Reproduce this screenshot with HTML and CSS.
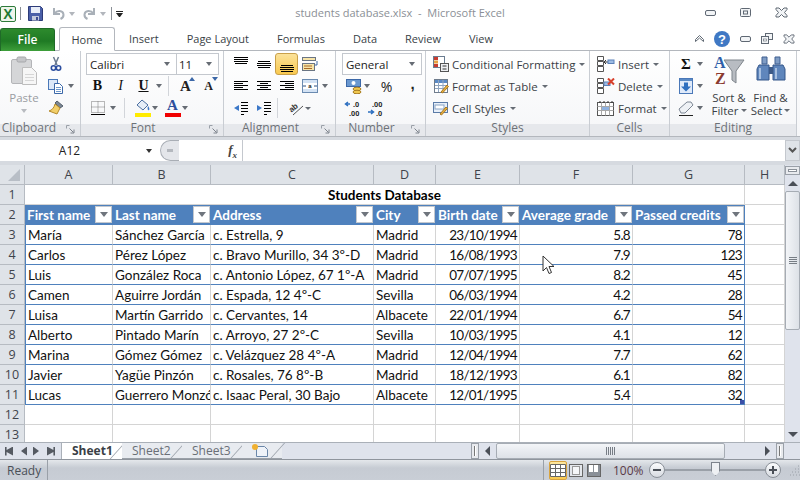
FILE: index.html
```html
<!DOCTYPE html>
<html lang="en">
  <head>
    <meta charset="UTF-8" />
    <meta name="viewport" content="width=device-width, initial-scale=1.0" />
    <title>students database.xlsx - Microsoft Excel</title>
    <link rel="stylesheet" href="styles.css">
  </head>
  <body>
    <svg class="defs" aria-hidden="true">
      <symbol id="al-top" viewBox="0 0 16 16"><path d="M1 1.500h14M1 3.500h14M1 5.500h14M2 7.500h12" stroke="#000" fill="none"/></symbol>
      <symbol id="al-mid" viewBox="0 0 16 16"><path d="M2 5.500h12M1 7.500h14M1 9.500h14M2 11.500h12" stroke="#000" fill="none"/></symbol>
      <symbol id="al-bot" viewBox="0 0 16 16"><path d="M2 9.500h12M1 11.500h14M1 13.500h14M2 15.500h12" stroke="#000" fill="none"/></symbol>
      <symbol id="al-left" viewBox="0 0 16 16"><path d="M1 3.500h14M1 5.500h9M1 7.500h14M1 9.500h9M1 11.500h14" stroke="#000" fill="none"/></symbol>
      <symbol id="al-center" viewBox="0 0 16 16"><path d="M1 3.500h14M4 5.500h8M1 7.500h14M4 9.500h8M1 11.500h14" stroke="#000" fill="none"/></symbol>
      <symbol id="al-right" viewBox="0 0 16 16"><path d="M1 3.500h14M6 5.500h9M1 7.500h14M6 9.500h9M1 11.500h14" stroke="#000" fill="none"/></symbol>
      <symbol id="launcher" viewBox="0 0 9 9"><path d="M.5 3.500v-3h3" stroke="#9aa0a8" fill="none"/><path d="M3.500 3.500l4 4M8 4.500V8H4.500" stroke="#7d838c" fill="none"/></symbol>
      <symbol id="win-x" viewBox="0 0 13 11"><path d="M1 1h3l2.500 2.500L9 1h3v1.500L9.500 5.500 12 8.500V10H9L6.500 7.500 4 10H1V8.500l2.500-3L1 2.500z" fill="#f2f4f6" stroke="#5f6873"/></symbol>
      <symbol id="win-min" viewBox="0 0 11 6"><rect x=".5" y=".5" width="10" height="5" rx="1.500" fill="#f2f4f6" stroke="#5f6873"/></symbol>
      <symbol id="gear" viewBox="0 0 16 16"><rect x="1.500" y="1.500" width="13" height="13" fill="#fff" stroke="#6f7c8c"/><rect x="2" y="2" width="12" height="3" fill="#5a8ac6"/><path d="M5.500 2v12M10 2v12M2 7.500h12M2 10.500h12" stroke="#8fa5c0" fill="none"/></symbol>
    </svg>

    <header class="title-bar">
      <div class="quick">
        <svg class="logo" width="16" height="16" viewBox="0 0 16 16"><rect x=".5" y=".5" width="15" height="15" rx="1.500" fill="#eef5ea" stroke="#2d7a3a"/><text x="8" y="13" text-anchor="middle" class="logo-x">X</text></svg>
        <span class="q-sep"></span>
        <svg class="q-save" width="15" height="15" viewBox="0 0 15 15"><path d="M.5 .5h12l2 2v12H.5z" fill="#4a5fa8" stroke="#2d3b78"/><rect x="3" y="1" width="9" height="6" fill="#e8edf8"/><rect x="4" y="10" width="7" height="4.500" fill="#c3c9dc"/><rect x="8" y="11" width="2" height="3" fill="#3c4c90"/></svg>
        <svg class="q-undo" width="13" height="13" viewBox="0 0 13 13"><path d="M2 1v6h6M2.500 6.500C5 3 11 3 11.500 7.500c.2 2-1 3.500-3 4.500" fill="none" stroke="#a9b0b8" stroke-width="2"/></svg>
        <span class="caret q-caret"></span>
        <svg class="q-redo" width="13" height="13" viewBox="0 0 13 13"><path d="M11 1v6H5M10.500 6.500C8 3 2 3 1.500 7.500c-.2 2 1 3.500 3 4.500" fill="none" stroke="#a9b0b8" stroke-width="2"/></svg>
        <span class="caret q-caret"></span>
        <span class="q-sep q-sep-2"></span>
        <span class="q-custom"></span>
      </div>
      <div class="doc-title">students database.xlsx&nbsp; - &nbsp;Microsoft Excel</div>
      <div class="win-btns">
        <svg width="11" height="6"><use href="#win-min"/></svg>
        <svg width="11" height="9" viewBox="0 0 11 9"><rect x=".5" y=".5" width="10" height="8" rx="1" fill="#f2f4f6" stroke="#5f6873"/><rect x="3.500" y="3" width="4" height="3" fill="none" stroke="#5f6873"/></svg>
        <svg width="13" height="11"><use href="#win-x"/></svg>
      </div>
    </header>

    <nav class="tab-bar">
      <div class="tab-file">File</div>
      <div class="tab tab-active">Home</div>
      <div class="tab">Insert</div>
      <div class="tab">Page Layout</div>
      <div class="tab">Formulas</div>
      <div class="tab">Data</div>
      <div class="tab">Review</div>
      <div class="tab">View</div>
      <div class="doc-btns">
        <svg width="9" height="7" viewBox="0 0 9 7"><path d="M.5 6.500V4.500L4.500 .5l4 4v2L4.500 3z" fill="#fff" stroke="#5f6873"/></svg>
        <svg width="16" height="16" viewBox="0 0 16 16"><circle cx="8" cy="8" r="8" fill="#3f78c4"/><text x="8" y="12.500" text-anchor="middle" class="help-q">?</text></svg>
        <svg width="11" height="6"><use href="#win-min"/></svg>
        <svg width="12" height="11" viewBox="0 0 12 11"><rect x="4.500" y=".5" width="7" height="6" fill="#f2f4f6" stroke="#5f6873"/><rect x=".5" y="3.500" width="7" height="7" fill="#f2f4f6" stroke="#5f6873"/><rect x="2.500" y="6" width="3" height="2" fill="#fff" stroke="#5f6873" stroke-width=".6"/></svg>
        <svg width="12" height="10" viewBox="0 0 13 11"><use href="#win-x"/></svg>
      </div>
    </nav>

    <section class="ribbon">
      <div class="group g-clip">
        <div class="group-body g-row">
          <div class="big big-paste">
            <svg width="26" height="30" viewBox="0 0 26 30"><rect x=".5" y="3.500" width="20" height="24" rx="1.500" fill="#d5d6d8" stroke="#b4b5b8"/><rect x="6" y="1" width="9" height="5" rx="1.500" fill="#c4c5c8" stroke="#a6a7aa"/><path d="M11.500 11.500h9l5 5v12h-14z" fill="#f6f6f6" stroke="#bdbdbd"/><path d="M14 18.500h9M14 21.500h9M14 24.500h9" stroke="#d6d6d6"/></svg>
            <span class="big-label big-label-dim">Paste</span>
            <span class="caret caret-dim"></span>
          </div>
          <div class="col-tools">
            <div class="row">
              <svg class="i16" viewBox="0 0 16 16"><path d="M5.500 1l3.500 8M10.500 1L7 9" stroke="#6b7a90" stroke-width="1.500" fill="none"/><circle cx="5.500" cy="12" r="2.200" fill="none" stroke="#2d4fa0" stroke-width="1.600"/><circle cx="10.500" cy="12" r="2.200" fill="none" stroke="#2d4fa0" stroke-width="1.600"/></svg>
            </div>
            <div class="row">
              <svg class="i16" viewBox="0 0 16 16"><rect x=".5" y="1.500" width="9" height="10" fill="#dce8f8" stroke="#4a78b8"/><path d="M6.500 5.500h5l3 3v7h-8z" fill="#fff" stroke="#3c68a8"/><path d="M8 9.500h5M8 11.500h5M8 13.500h5" stroke="#6e98cc"/></svg>
              <span class="caret caret-gap"></span>
            </div>
            <div class="row">
              <svg class="i16" viewBox="0 0 16 16"><path d="M9 1l6 5-3 2-5-5z" fill="#7b8794" stroke="#56606c"/><path d="M7 4l5 4-3 6-8-3c3-1 5-3 6-7z" fill="#f2cf6a" stroke="#b58a2c"/></svg>
            </div>
          </div>
        </div>
        <div class="group-label">Clipboard<svg class="launcher"><use href="#launcher"/></svg></div>
      </div>

      <div class="group g-font">
        <div class="group-body">
          <div class="row">
            <div class="combo combo-font"><span>Calibri</span><span class="caret"></span></div>
            <div class="combo combo-size"><span>11</span><span class="caret"></span></div>
          </div>
          <div class="row">
            <span class="tool glyph">B</span>
            <span class="tool glyph g-i">I</span>
            <span class="tool glyph g-u">U</span>
            <span class="caret caret-tool"></span>
            <span class="v-sep"></span>
            <span class="tool grow-a">A<i class="tri-up"></i></span>
            <span class="tool shrink-a">A<i class="tri-down"></i></span>
          </div>
          <div class="row">
            <span class="tool"><svg class="i16" viewBox="0 0 16 16"><path d="M1.500 1.500h13v11h-13zM8 1.500v11M1.500 7h13" stroke="#777" stroke-dasharray="1 1" fill="none"/><path d="M1 14.500h14" stroke="#000"/></svg></span>
            <span class="caret caret-tool"></span>
            <span class="v-sep v-sep-fill"></span>
            <span class="tool-color">
              <svg class="i16" viewBox="0 0 16 13"><path d="M7 1l6 5-5 5-6-5z" fill="#e6eef8" stroke="#4a6ea0"/><path d="M13 7c1 1.500 2 3 1 4s-2-1-1-4z" fill="#3f78c4"/></svg>
              <i class="bar bar-yellow"></i>
            </span>
            <span class="caret caret-tool"></span>
            <span class="tool-color tool-color-2">
              <span class="color-a">A</span>
              <i class="bar bar-red"></i>
            </span>
            <span class="caret caret-tool"></span>
          </div>
        </div>
        <div class="group-label">Font<svg class="launcher"><use href="#launcher"/></svg></div>
      </div>

      <div class="group g-align">
        <div class="group-body">
          <div class="row">
            <span class="tool"><svg class="i16"><use href="#al-top"/></svg></span>
            <span class="tool"><svg class="i16"><use href="#al-mid"/></svg></span>
            <span class="tool tool-on"><svg class="i16"><use href="#al-bot"/></svg></span>
            <span class="tool"><svg class="i16" viewBox="0 0 16 16"><rect x=".5" y="1.500" width="13" height="3" fill="#f7e4a8" stroke="#6a7584"/><rect x=".5" y="7.500" width="12" height="7" fill="#f7e4a8" stroke="#6a7584"/><path d="M2 10h8M2 12.500h8" stroke="#a86a28"/><path d="M15 5v4h-2" stroke="#3c68a8" fill="none"/></svg></span>
          </div>
          <div class="row">
            <span class="tool"><svg class="i16"><use href="#al-left"/></svg></span>
            <span class="tool"><svg class="i16"><use href="#al-center"/></svg></span>
            <span class="tool"><svg class="i16"><use href="#al-right"/></svg></span>
            <span class="tool"><svg class="i16" viewBox="0 0 16 16"><rect x=".5" y="1.500" width="15" height="13" fill="#d3e2f4" stroke="#6a8ab0"/><rect x="1" y="5" width="14" height="6" fill="#fff"/><text x="8" y="10" text-anchor="middle" class="merge-a">a</text><path d="M1 8h3M15 8h-3" stroke="#2d4f80"/></svg></span>
            <span class="caret caret-merge"></span>
          </div>
          <div class="row">
            <span class="tool"><svg class="i16" viewBox="0 0 16 16"><path d="M8 2.500h7M8 5.500h7M8 8.500h7M8 11.500h7M8 14.500h3" stroke="#000" fill="none"/><path d="M6 5v6L1 8z" fill="#3c78c8"/></svg></span>
            <span class="tool"><svg class="i16" viewBox="0 0 16 16"><path d="M8 2.500h7M8 5.500h7M8 8.500h7M8 11.500h7M8 14.500h3" stroke="#000" fill="none"/><path d="M1 5v6l5-3z" fill="#3c78c8"/></svg></span>
            <span class="v-sep v-sep-align"></span>
            <span class="tool tool-orient"><svg class="i16" viewBox="0 0 16 16"><text x="1" y="10" class="orient-ab" transform="rotate(-40 6 8)">ab</text><path d="M5 15L15 6" stroke="#555"/></svg></span>
            <span class="caret caret-orient"></span>
          </div>
        </div>
        <div class="group-label">Alignment<svg class="launcher"><use href="#launcher"/></svg></div>
      </div>

      <div class="group g-num">
        <div class="group-body">
          <div class="row">
            <div class="combo combo-num"><span>General</span><span class="caret"></span></div>
          </div>
          <div class="row">
            <span class="tool"><svg class="i16" viewBox="0 0 16 16"><rect x=".5" y="1.500" width="14" height="7" fill="#6a98d0" stroke="#3c68a8"/><circle cx="7.500" cy="5" r="2" fill="#fff"/><ellipse cx="11" cy="11" rx="4" ry="1.800" fill="#f0c850" stroke="#a87c20"/><ellipse cx="11" cy="14" rx="4" ry="1.800" fill="#f0c850" stroke="#a87c20"/></svg></span>
            <span class="caret caret-tool caret-num"></span>
            <span class="tool tool-pct">%</span>
            <span class="tool tool-comma">,</span>
          </div>
          <div class="row">
            <span class="tool tool-dec"><svg class="i22" viewBox="0 0 20 17"><text x="9" y="7" class="dec-t">.0</text><text x="5" y="15.500" class="dec-t">.00</text><path d="M6 4H2M4 2L1.500 4 4 6" stroke="#2d6fc0" fill="none" stroke-width="1.500"/></svg></span>
            <span class="tool tool-dec"><svg class="i22" viewBox="0 0 20 17"><text x="5" y="7" class="dec-t">.00</text><text x="9" y="15.500" class="dec-t">.0</text><path d="M1 12h5M4 10l2.500 2L4 14" stroke="#2d6fc0" fill="none" stroke-width="1.500"/></svg></span>
          </div>
        </div>
        <div class="group-label">Number<svg class="launcher"><use href="#launcher"/></svg></div>
      </div>

      <div class="group g-styles">
        <div class="group-body">
          <div class="row row-cmd">
            <svg class="i16" viewBox="0 0 16 16"><rect x=".5" y=".5" width="11" height="11" fill="#fff" stroke="#6a7c90"/><rect x="1" y="1" width="4" height="3" fill="#c83c30"/><rect x="1" y="4.500" width="4" height="3" fill="#e8a040"/><rect x="1" y="8" width="4" height="3" fill="#c83c30"/><rect x="7.500" y="7.500" width="8" height="8" fill="#eef0f3" stroke="#555"/><path d="M9.500 10h4M9.500 13h4" stroke="#333"/></svg>
            <span class="cmd-text">Conditional Formatting</span><span class="caret caret-cmd"></span>
          </div>
          <div class="row row-cmd">
            <svg class="i16" viewBox="0 0 16 16"><use href="#gear"/><path d="M8 14l6-7 1.500 1.500-6 6.500z" fill="#e8b040" stroke="#a87820"/></svg>
            <span class="cmd-text">Format as Table</span><span class="caret caret-cmd"></span>
          </div>
          <div class="row row-cmd">
            <svg class="i16" viewBox="0 0 16 16"><rect x=".5" y="2.500" width="14" height="10" fill="#e8f0fa" stroke="#5c7ca8"/><rect x="2" y="5" width="9" height="4" fill="#fff" stroke="#8aa4c4"/><path d="M7 14l6-7 1.500 1.500-6 6.500z" fill="#e8b040" stroke="#a87820"/></svg>
            <span class="cmd-text">Cell Styles</span><span class="caret caret-cmd"></span>
          </div>
        </div>
        <div class="group-label">Styles</div>
      </div>

      <div class="group g-cells">
        <div class="group-body">
          <div class="row row-cmd">
            <svg class="i18" viewBox="0 0 18 16"><path d="M.5 .5h6v4h-6zM.5 5.500h6v4h-6zM.5 10.500h6v5h-6z" fill="#fff" stroke="#555"/><path d="M7 6h4M9 4L7 6l2 2" stroke="#333" fill="none"/><rect x="11" y="4" width="6" height="3.500" fill="#9dbce4" stroke="#5a80b8"/></svg>
            <span class="cmd-text">Insert</span><span class="caret caret-cmd"></span>
          </div>
          <div class="row row-cmd">
            <svg class="i18" viewBox="0 0 18 16"><path d="M.5 .5h6v4h-6zM.5 5.500h6v4h-6zM.5 10.500h6v5h-6z" fill="#fff" stroke="#555"/><rect x="7" y="4" width="6" height="3.500" fill="#9dbce4" stroke="#5a80b8"/><path d="M11 .5l6 6M17 .5l-6 6" stroke="#d8402c" stroke-width="2"/></svg>
            <span class="cmd-text">Delete</span><span class="caret caret-cmd"></span>
          </div>
          <div class="row row-cmd">
            <svg class="i18" viewBox="0 0 18 16"><rect x=".5" y="2.500" width="16" height="13" fill="#fff" stroke="#555"/><path d="M.5 6.500h16M.5 10.500h16M4.500 2.500v13M8.500 2.500v13M12.500 2.500v13" stroke="#a8a8a8"/><rect x="5" y="7" width="7" height="3" fill="#8fb2e0"/><path d="M3 1v2M7 1v2M11 1v2M15 1v2" stroke="#333"/></svg>
            <span class="cmd-text">Format</span><span class="caret caret-cmd"></span>
          </div>
        </div>
        <div class="group-label">Cells</div>
      </div>

      <div class="group g-edit">
        <div class="group-body g-row">
          <div class="col-tools col-edit">
            <div class="row"><span class="sigma">&Sigma;</span><span class="caret caret-edit"></span></div>
            <div class="row">
              <svg class="i16" viewBox="0 0 16 16"><rect x="1.500" y=".5" width="13" height="15" fill="#dfeafa" stroke="#4a78b8"/><rect x="2" y="1" width="12" height="2" fill="#5a8ac6"/><path d="M6 4.500h4v4h3l-5 5-5-5h3z" fill="#2d6fc0"/></svg>
              <span class="caret caret-edit"></span>
            </div>
            <div class="row">
              <svg class="i16" viewBox="0 0 16 16"><path d="M1 9l8-7h4l2 3-8 8H3z" fill="#eef1f5" stroke="#7d8794"/><path d="M1 15.500h14" stroke="#222"/></svg>
              <span class="caret caret-edit"></span>
            </div>
          </div>
          <div class="big big-sort">
            <svg width="32" height="33" viewBox="0 0 32 33"><path d="M11 6h20l-8 11v12l-4-3V17z" fill="#b8bcc2" stroke="#7f858c"/><text x="1" y="14" class="sort-a">A</text><text x="2" y="30" class="sort-z">Z</text></svg>
            <span class="big-label">Sort &amp;</span>
            <span class="big-label">Filter<span class="caret caret-inline"></span></span>
          </div>
          <div class="big big-find">
            <svg width="30" height="33" viewBox="0 0 30 33"><path d="M6 3h5v7H6zM19 3h5v7h-5z" fill="#7f9cc4" stroke="#3f5f90"/><path d="M3 11h10v15H1V15zM17 11h10l2 4v11H17z" fill="#5f86bc" stroke="#34568a"/><path d="M13 13h4v7h-4z" fill="#3c5a88"/><path d="M4 14v11M20 14v11" stroke="#a8c0e0" stroke-width="2"/></svg>
            <span class="big-label">Find &amp;</span>
            <span class="big-label">Select<span class="caret caret-inline"></span></span>
          </div>
        </div>
        <div class="group-label">Editing</div>
      </div>
    </section>

    <section class="formula-bar">
      <div class="name-box"><span class="name-val">A12</span><span class="caret caret-dark"></span></div>
      <div class="fx-wrap">
        <span class="fx-knob"><i></i></span>
        <span class="fx">f<sub>x</sub></span>
      </div>
      <div class="formula-input"></div>
      <div class="formula-more"><svg width="9" height="7" viewBox="0 0 9 7"><path d="M1 1l3.500 3.500L8 1" fill="none" stroke="#555" stroke-width="2"/></svg></div>
    </section>

    <main class="sheet-area">
      <div class="grid-wrap">
        <table class="grid">
          <colgroup>
            <col class="c-rh"><col class="c-a"><col class="c-b"><col class="c-c"><col class="c-d"><col class="c-e"><col class="c-f"><col class="c-g"><col class="c-h">
          </colgroup>
          <thead>
            <tr>
              <th class="corner"><i></i></th>
              <th>A</th><th>B</th><th>C</th><th>D</th><th>E</th><th>F</th><th>G</th><th>H</th>
            </tr>
          </thead>
          <tbody>
            <tr class="title-row"><th>1</th><td colspan="7" class="sheet-title">Students Database</td><td></td></tr>
            <tr class="head-row">
              <th>2</th>
              <td><div class="hd">First name<span class="filter"></span></div></td>
              <td><div class="hd">Last name<span class="filter"></span></div></td>
              <td><div class="hd">Address<span class="filter"></span></div></td>
              <td><div class="hd">City<span class="filter"></span></div></td>
              <td><div class="hd">Birth date<span class="filter"></span></div></td>
              <td><div class="hd">Average grade<span class="filter"></span></div></td>
              <td><div class="hd">Passed credits<span class="filter"></span></div></td>
              <td class="plain"></td>
            </tr>
            <tr class="data"><th>3</th><td>María</td><td>Sánchez García</td><td>c. Estrella, 9</td><td>Madrid</td><td class="num">23/10/1994</td><td class="num">5.8</td><td class="num">78</td><td class="plain"></td></tr>
            <tr class="data"><th>4</th><td>Carlos</td><td>Pérez López</td><td>c. Bravo Murillo, 34 3º-D</td><td>Madrid</td><td class="num">16/08/1993</td><td class="num">7.9</td><td class="num">123</td><td class="plain"></td></tr>
            <tr class="data"><th>5</th><td>Luis</td><td>González Roca</td><td>c. Antonio López, 67 1º-A</td><td>Madrid</td><td class="num">07/07/1995</td><td class="num">8.2</td><td class="num">45</td><td class="plain"></td></tr>
            <tr class="data"><th>6</th><td>Camen</td><td>Aguirre Jordán</td><td>c. Espada, 12 4º-C</td><td>Sevilla</td><td class="num">06/03/1994</td><td class="num">4.2</td><td class="num">28</td><td class="plain"></td></tr>
            <tr class="data"><th>7</th><td>Luisa</td><td>Martín Garrido</td><td>c. Cervantes, 14</td><td>Albacete</td><td class="num">22/01/1994</td><td class="num">6.7</td><td class="num">54</td><td class="plain"></td></tr>
            <tr class="data"><th>8</th><td>Alberto</td><td>Pintado Marín</td><td>c. Arroyo, 27 2º-C</td><td>Sevilla</td><td class="num">10/03/1995</td><td class="num">4.1</td><td class="num">12</td><td class="plain"></td></tr>
            <tr class="data"><th>9</th><td>Marina</td><td>Gómez Gómez</td><td>c. Velázquez 28 4º-A</td><td>Madrid</td><td class="num">12/04/1994</td><td class="num">7.7</td><td class="num">62</td><td class="plain"></td></tr>
            <tr class="data"><th>10</th><td>Javier</td><td>Yagüe Pinzón</td><td>c. Rosales, 76 8º-B</td><td>Madrid</td><td class="num">18/12/1993</td><td class="num">6.1</td><td class="num">82</td><td class="plain"></td></tr>
            <tr class="data"><th>11</th><td>Lucas</td><td>Guerrero Monzón</td><td>c. Isaac Peral, 30 Bajo</td><td>Albacete</td><td class="num">12/01/1995</td><td class="num">5.4</td><td class="num last-cell">32<i class="handle"></i></td><td class="plain"></td></tr>
            <tr class="blank"><th>12</th><td></td><td></td><td></td><td></td><td></td><td></td><td></td><td></td></tr>
            <tr class="blank"><th>13</th><td></td><td></td><td></td><td></td><td></td><td></td><td></td><td></td></tr>
          </tbody>
        </table>
        <svg class="pointer" width="15" height="21" viewBox="0 0 15 21"><path d="M1 1v15l3.500-3.500 2.500 6 2.500-1-2.500-6H12z" fill="#fff" stroke="#333"/></svg>
      </div>
      <aside class="v-scroll">
        <div class="split-h"><i></i></div>
        <div class="arrow-box"><span class="tri tri-n"></span></div>
        <div class="v-thumb"><i></i><i></i><i></i><i></i></div>
        <div class="v-rest"></div>
        <div class="arrow-box"><span class="tri tri-s"></span></div>
      </aside>
    </main>

    <section class="sheet-bar">
      <div class="sheet-nav">
        <span class="nav-ico nav-first"></span>
        <span class="nav-ico nav-prev"></span>
        <span class="nav-ico nav-next"></span>
        <span class="nav-ico nav-last"></span>
      </div>
      <div class="sheet-tabs">
        <div class="stab stab-on">Sheet1</div>
        <div class="stab">Sheet2</div>
        <div class="stab">Sheet3</div>
        <div class="stab stab-new"><svg width="18" height="15" viewBox="0 0 18 15"><path d="M5.500 3.500h8l3 3v7h-11z" fill="#eef2f8" stroke="#6a86a8"/><circle cx="4" cy="4" r="3" fill="#f0b030"/></svg></div>
      </div>
      <div class="h-split"><i></i></div>
      <span class="tri tri-w"></span>
      <div class="h-thumb"><i></i><i></i><i></i><i></i><i></i></div>
      <div class="h-rest"></div>
      <span class="tri tri-e"></span>
      <div class="h-split h-split-right"><i></i></div>
    </section>

    <footer class="status-bar">
      <span class="status-text">Ready</span>
      <span class="st-sep"></span>
      <span class="st-fill"></span>
      <span class="st-sep"></span>
      <span class="view-btn view-on"><svg width="16" height="13" viewBox="0 0 16 13"><path d="M.5 .5h15v12H.5zM.5 4.500h15M.5 8.500h15M5.500 .5v12M10.500 .5v12" fill="#fff" stroke="#666"/></svg></span>
      <span class="view-btn"><svg width="14" height="13" viewBox="0 0 14 13"><rect x=".5" y=".5" width="13" height="12" fill="#e4e7ec" stroke="#666"/><rect x="3.500" y="2.500" width="7" height="8" fill="#f6f7f9" stroke="#999"/></svg></span>
      <span class="view-btn"><svg width="14" height="13" viewBox="0 0 14 13"><rect x=".5" y=".5" width="13" height="12" fill="#8a9098" stroke="#666"/><rect x="2" y="1" width="4" height="7" fill="#fff"/><rect x="7" y="1" width="4" height="7" fill="#fff"/></svg></span>
      <span class="zoom-pct">100%</span>
      <span class="zoom-btn"><i class="zh"></i></span>
      <span class="zoom-track"><i class="zoom-thumb"></i></span>
      <span class="zoom-btn"><i class="zh"></i><i class="zv"></i></span>
      <svg class="grip" width="10" height="13" viewBox="0 0 10 13"><path d="M8 2h1M5 5h1M8 5h1M2 8h1M5 8h1M8 8h1M0 11h1M3 11h1M6 11h1M9 11h1" stroke="#9aa0a8"/></svg>
    </footer>
  </body>
</html>
```

FILE: styles.css
```css
/* Base styles */
* {
  box-sizing: border-box;
}
html,
body {
  margin: 0;
  padding: 0;
}
body {
  width: 800px;
  height: 480px;
  overflow: hidden;
  display: flex;
  flex-direction: column;
  background: #fff;
  color: #3a3f46;
  font-family: "Open Sans", "Noto Sans", sans-serif;
  font-size: 11.5px;
}
.defs {
  display: none;
}
svg {
  display: block;
  flex: none;
}
.i16 {
  width: 16px;
  height: 16px;
}
.i18 {
  width: 18px;
  height: 16px;
}
.i22 {
  width: 20px;
  height: 17px;
}

/* Carets */
.caret {
  display: block;
  flex: none;
  width: 0;
  height: 0;
  border-left: 3.5px solid transparent;
  border-right: 3.5px solid transparent;
  border-top: 4px solid #666c74;
}
.caret-dim {
  border-top-color: #b8bbc0;
}
.caret-dark {
  border-top-color: #333;
}

/* Title bar */
.title-bar {
  height: 25px;
  flex: none;
  display: grid;
  grid-template-columns: 1fr auto 1fr;
  align-items: center;
}
.quick {
  display: flex;
  align-items: center;
  height: 25px;
  padding-top: 2px;
}
.logo-x {
  font: bold 14px "Liberation Sans", sans-serif;
  fill: #1e7a34;
}
.q-sep {
  width: 1px;
  height: 13px;
  margin-left: 4px;
  background: #8a8f96;
}
.q-save {
  margin-left: 7px;
}
.q-undo {
  margin-left: 9px;
}
.q-redo {
  margin-left: 8px;
}
.q-caret {
  margin-left: 4px;
  border-top-color: #b2b6bc;
}
.q-sep-2 {
  margin-left: 5px;
}
.q-custom {
  width: 7px;
  height: 6px;
  margin-left: 4px;
  border-top: 1px solid #222;
}
.q-custom::after {
  content: "";
  display: block;
  margin-top: 1px;
  border-left: 3.5px solid transparent;
  border-right: 3.5px solid transparent;
  border-top: 4px solid #222;
}
.doc-title {
  color: #8b8f96;
  font-size: 11px;
  white-space: nowrap;
}
.win-btns {
  display: flex;
  align-items: center;
  justify-content: flex-end;
  gap: 24px;
  padding-right: 12px;
}

/* Tabs */
.tab-bar {
  height: 26px;
  flex: none;
  display: flex;
  align-items: flex-end;
  padding-top: 2px;
  border-bottom: 1px solid #b3b7bd;
  background: #fff;
}
.tab-file {
  width: 55px;
  height: 23px;
  margin-bottom: -1px;
  background: linear-gradient(#2d8a2d, #1f7a24 55%, #3d9e3a);
  border: 1px solid #1f6a28;
  border-bottom: none;
  border-radius: 3px 3px 0 0;
  color: #fff;
  font-weight: 600;
  font-size: 12px;
  text-align: center;
  line-height: 22px;
}
.tab {
  height: 23px;
  padding: 0 14px;
  line-height: 23px;
  font-size: 11px;
  color: #3a3f46;
  white-space: nowrap;
}
.tab-active {
  width: 56px;
  height: 24px;
  margin-left: 4px;
  margin-bottom: -1px;
  padding: 0;
  text-align: center;
  background: #fff;
  border: 1px solid #b3b7bd;
  border-bottom: 1px solid #fff;
  border-radius: 3px 3px 0 0;
}
.doc-btns {
  margin-left: auto;
  display: flex;
  align-items: center;
  height: 23px;
  padding-right: 5px;
  gap: 10px;
}

.help-q {
  font: bold 13px "Liberation Sans", sans-serif;
  fill: #fff;
}

/* Ribbon */
.ribbon {
  height: 86px;
  flex: none;
  display: flex;
  background: linear-gradient(#fff, #f5f6f8);
  border-bottom: 1px solid #b3b7bd;
}
.group {
  display: flex;
  flex-direction: column;
  border-right: 1px solid #c9cdd3;
}
.group-body {
  height: 73px;
  padding-top: 2px;
}
.g-row {
  display: flex;
}
.group-label {
  position: relative;
  height: 12px;
  line-height: 8px;
  background: #e6e8ec;
  color: #6d7278;
  text-align: center;
  font-size: 12px;
}
.launcher {
  position: absolute;
  right: 5px;
  top: 1px;
  width: 9px;
  height: 9px;
}
.row {
  height: 22px;
  display: flex;
  align-items: center;
}
.g-clip {
  width: 81px;
}
.g-clip .group-label {
  padding-right: 22px;
}
.g-font {
  width: 143px;
  padding-left: 5px;
}
.g-font .group-label {
  margin-left: -5px;
  padding-right: 18px;
}
.g-align {
  width: 112px;
  padding-left: 5px;
}
.g-align .group-label {
  margin-left: -5px;
  padding-right: 18px;
}
.g-num {
  width: 90px;
  padding-left: 6px;
}
.g-num .group-label {
  margin-left: -6px;
  padding-right: 18px;
}
.g-styles {
  width: 164px;
  padding-left: 7px;
}
.g-styles .group-label {
  margin-left: -7px;
}
.g-cells {
  width: 80px;
  padding-left: 7px;
}
.g-cells .group-label {
  margin-left: -7px;
}
.g-edit {
  width: 127px;
}
.big {
  display: flex;
  flex-direction: column;
  align-items: center;
}
.big-paste {
  width: 48px;
  padding-top: 3px;
}
.big-label {
  display: flex;
  align-items: center;
  gap: 2px;
  height: 13px;
  line-height: 13px;
  white-space: nowrap;
}
.big-label-dim {
  height: 18px;
  line-height: 18px;
  margin-top: 3px;
  color: #9a9da2;
}
.big-paste .caret {
  margin-top: 2px;
}
.col-tools .caret-gap {
  margin-left: 4px;
}
.col-tools {
  width: 32px;
}
.col-edit {
  width: 36px;
  padding-left: 8px;
}
.caret-edit {
  margin-left: 3px;
}
.sigma {
  width: 16px;
  text-align: center;
  font: bold 15px "Liberation Serif", serif;
  color: #111;
}
.big-sort {
  width: 44px;
  margin-left: 1px;
  padding-top: 1px;
}
.big-find {
  width: 43px;
  margin-left: -2px;
  padding-top: 1px;
}
.big-sort svg,
.big-find svg {
  margin-bottom: 4px;
}
.sort-a {
  font: bold 16px "Liberation Serif", serif;
  fill: #2f5fa8;
}
.sort-z {
  font: bold 16px "Liberation Serif", serif;
  fill: #8a3a30;
}
.caret-inline {
  border-left-width: 3px;
  border-right-width: 3px;
  border-top-width: 3px;
}

/* Combos */
.combo {
  height: 22px;
  display: flex;
  align-items: center;
  justify-content: space-between;
  padding: 0 6px 0 3px;
  background: #fff;
  border: 1px solid #c4c8ce;
  color: #222;
  font-size: 11.5px;
}
.combo-font {
  width: 91px;
}
.combo-size {
  width: 43px;
  margin-left: -1px;
  padding-left: 2px;
}
.combo-num {
  width: 80px;
}

/* Tool buttons */
.tool {
  width: 23px;
  height: 22px;
  flex: none;
  display: flex;
  align-items: center;
  justify-content: center;
}
.glyph {
  font: bold 14px "Liberation Serif", serif;
  color: #111;
}
.g-i {
  font-style: italic;
  font-weight: normal;
}
.g-u {
  text-decoration: underline;
}
.caret-tool {
  margin: 0 2px 0 1px;
}
.v-sep {
  width: 1px;
  height: 20px;
  margin: 0 5px 0 4px;
  background: #d2d5da;
}
.v-sep-fill {
  margin: 0 9px 0 6px;
}
.v-sep-align {
  margin: 0 8px 0 2px;
}
.grow-a,
.shrink-a {
  position: relative;
  font: bold 15px "Liberation Serif", serif;
  color: #222;
}
.shrink-a {
  font-size: 12px;
}
.tri-up,
.tri-down {
  position: absolute;
  right: 2px;
  top: 2px;
  border-left: 3px solid transparent;
  border-right: 3px solid transparent;
}
.tri-up {
  border-bottom: 4px solid #3c68a8;
}
.tri-down {
  border-top: 4px solid #3c68a8;
}
.tool-color {
  width: 17px;
  flex: none;
  display: flex;
  flex-direction: column;
  align-items: center;
}
.tool-color svg {
  height: 13px;
}
.tool-color-2 {
  margin-left: 4px;
}
.color-a {
  font: bold 15px/13px "Liberation Serif", serif;
  color: #2d4f9c;
  height: 13px;
}
.bar {
  display: block;
  width: 16px;
  height: 4px;
  margin-top: 1px;
}
.bar-yellow {
  background: #ffeb00;
}
.bar-red {
  background: #f00000;
}
.tool-on {
  background: linear-gradient(#fbe29a, #f9c94f);
  border: 1px solid #c9a04a;
  border-radius: 3px;
}
.merge-a {
  font: bold 6px "Liberation Sans", sans-serif;
  fill: #222;
}
.caret-merge {
  margin-left: 1px;
}
.tool-orient {
  width: 19px;
}
.orient-ab {
  font: bold 8px "Liberation Sans", sans-serif;
  fill: #333;
}
.caret-orient {
  border-left-width: 3px;
  border-right-width: 3px;
  border-top-width: 3px;
}
.caret-num {
  margin: 0 3px 0 -1px;
}
.tool-pct {
  margin-left: 2px;
  font-size: 14px;
  color: #222;
}
.tool-comma {
  font: bold 15px "Liberation Sans", sans-serif;
  color: #222;
  padding-bottom: 6px;
  margin-left: 3px;
}
.tool-dec {
  width: 23px;
}
.dec-t {
  font: bold 7.5px "Liberation Sans", sans-serif;
  fill: #222;
}
.row-cmd .cmd-text {
  margin-left: 3px;
  white-space: nowrap;
}
.caret-cmd {
  margin-left: 4px;
  border-left-width: 3px;
  border-right-width: 3px;
  border-top-width: 3px;
}

/* Formula bar */
.formula-bar {
  height: 28px;
  flex: none;
  display: flex;
  padding: 3px 0 4px;
  background: #d6dae0;
}
.name-box {
  width: 158px;
  display: flex;
  align-items: center;
  background: #fff;
  color: #222;
  font-size: 12px;
  padding-right: 6px;
}
.name-val {
  flex: 1;
  text-align: center;
  padding-right: 7px;
}
.fx-wrap {
  width: 85px;
  display: flex;
  align-items: center;
  background: #fff;
  border-right: 1px solid #c4c8ce;
}
.fx-knob {
  width: 19px;
  height: 21px;
  margin-left: 2px;
  background: #e4e6ea;
  border: 1px solid #a9aeb5;
  border-right: none;
  border-radius: 11px 0 0 11px;
  display: flex;
  align-items: center;
  justify-content: center;
}
.fx-knob i {
  width: 6px;
  height: 3px;
  background: #b4b8be;
}
.fx {
  margin-left: auto;
  margin-right: 5px;
  font: italic bold 13px "Liberation Serif", serif;
  color: #444;
}
.fx sub {
  font-size: 9px;
}
.formula-input {
  flex: 1;
  background: #fff;
}
.formula-more {
  width: 15px;
  background: #dfe3e8;
  border: 1px solid #c4c8ce;
  display: flex;
  align-items: center;
  justify-content: center;
}

/* Sheet */
.sheet-area {
  height: 277px;
  flex: none;
  display: flex;
}
.grid-wrap {
  position: relative;
  width: 785px;
  overflow: hidden;
  height: 277px;
}
.grid {
  width: 785px;
  border-collapse: separate;
  border-spacing: 0;
  table-layout: fixed;
  font-family: "Lato", "Open Sans", sans-serif;
  font-size: 13.5px;
  color: #111;
}
.c-rh { width: 25px; }
.c-a { width: 88px; }
.c-b { width: 98px; }
.c-c { width: 163px; }
.c-d { width: 62px; }
.c-e { width: 84px; }
.c-f { width: 113px; }
.c-g { width: 112px; }
.c-h { width: 40px; }
.grid tr {
  height: 20px;
}
.grid th {
  padding: 0;
  height: 20px;
  background: #dfe3e8;
  border-right: 1px solid #b6bbc2;
  border-bottom: 1px solid #b6bbc2;
  color: #3f444b;
  font-weight: normal;
  font-family: "Open Sans", sans-serif;
  font-size: 12.5px;
  text-align: center;
}
.grid td {
  height: 20px;
  padding: 1px 2px 0;
  border-right: 1px solid #d4d4d4;
  border-bottom: 1px solid #d4d4d4;
  overflow: hidden;
  white-space: nowrap;
}
.corner {
  position: relative;
}
.corner i {
  position: absolute;
  right: 4px;
  bottom: 3px;
  border-left: 12px solid transparent;
  border-bottom: 12px solid #b8bec6;
}
.sheet-title {
  text-align: center;
  font-weight: bold;
  color: #000;
}
.grid .head-row td {
  background: #4f81bd;
  border-right: none;
  border-bottom: 1px solid #4f81bd;
  padding: 0 1px 0 2px;
}
.grid .head-row td.plain {
  background: #fff;
  border-right: 1px solid #d4d4d4;
  border-bottom: 1px solid #d4d4d4;
}
.hd {
  display: flex;
  align-items: center;
  justify-content: space-between;
  color: #fff;
  font-weight: bold;
}
.filter {
  width: 17px;
  height: 17px;
  flex: none;
  display: flex;
  align-items: center;
  justify-content: center;
  background: #fff;
  border: 1px solid #c4c8ce;
}
.filter::after {
  content: "";
  border-left: 4px solid transparent;
  border-right: 4px solid transparent;
  border-top: 5px solid #6f757d;
}
.grid .data td {
  border-bottom: 1px solid #4f81bd;
}
.grid .data td.plain {
  border-bottom: 1px solid #d4d4d4;
}
.grid .data td:nth-child(2) {
  border-left: 1px solid #4f81bd;
}
.grid .data td:nth-child(8) {
  border-right: 1px solid #4f81bd;
}
.num {
  text-align: right;
  letter-spacing: -0.7px;
}
.last-cell {
  position: relative;
}
.handle {
  position: absolute;
  right: 0;
  bottom: 0;
  width: 4px;
  height: 4px;
  background: #3c50a8;
}
.pointer {
  position: absolute;
  left: 542px;
  top: 90px;
}

/* Scrollbars */
.v-scroll {
  width: 15px;
  display: flex;
  flex-direction: column;
  background: #dfe3ec;
}
.split-h {
  height: 9px;
  margin-top: 1px;
  flex: none;
  background: #e8eaee;
  border: 1px solid #9aa0a8;
  display: flex;
  align-items: center;
  justify-content: center;
}
.split-h i {
  width: 9px;
  height: 3px;
  background: #fff;
  border: 1px solid #8a9098;
}
.arrow-box {
  height: 16px;
  flex: none;
  display: flex;
  align-items: center;
  justify-content: center;
}
.tri {
  display: block;
  width: 0;
  height: 0;
  flex: none;
}
.tri-n {
  border-left: 5px solid transparent;
  border-right: 5px solid transparent;
  border-bottom: 5px solid #4a4f57;
}
.tri-s {
  border-left: 5px solid transparent;
  border-right: 5px solid transparent;
  border-top: 5px solid #4a4f57;
}
.tri-w {
  border-top: 5px solid transparent;
  border-bottom: 5px solid transparent;
  border-right: 5px solid #4a4f57;
  margin-left: 6px;
}
.tri-e {
  border-top: 5px solid transparent;
  border-bottom: 5px solid transparent;
  border-left: 5px solid #4a4f57;
}
.v-thumb {
  height: 139px;
  flex: none;
  background: linear-gradient(90deg, #f3f5f8, #dde1e7);
  border: 1px solid #a6acb4;
  border-radius: 2px;
  display: flex;
  flex-direction: column;
  align-items: center;
  justify-content: center;
  gap: 1px;
}
.v-thumb i {
  width: 8px;
  height: 1px;
  background: #777d85;
}
.v-rest {
  flex: 1;
}
.sheet-bar {
  height: 17px;
  flex: none;
  display: flex;
  align-items: center;
  background: #dfe3ec;
  border-top: 1px solid #aab0b8;
}
.sheet-nav {
  width: 62px;
  height: 16px;
  flex: none;
  display: flex;
  align-items: center;
  padding-left: 5px;
  gap: 6px;
  border-right: 1px solid #aab0b8;
}
.nav-ico {
  width: 8px;
  height: 9px;
  background: #555a62;
}
.nav-first {
  clip-path: polygon(0 0, 20% 0, 20% 40%, 100% 0, 100% 100%, 20% 60%, 20% 100%, 0 100%);
}
.nav-prev {
  clip-path: polygon(100% 0, 100% 100%, 25% 50%);
}
.nav-next {
  clip-path: polygon(0 0, 0 100%, 75% 50%);
}
.nav-last {
  clip-path: polygon(100% 0, 80% 0, 80% 40%, 0 0, 0 100%, 80% 60%, 80% 100%, 100% 100%);
}
.sheet-tabs {
  width: 409px;
  height: 16px;
  flex: none;
  display: flex;
  align-items: stretch;
  overflow: hidden;
}
.stab {
  position: relative;
  width: 60px;
  flex: none;
  padding-left: 10px;
  color: #6a6f77;
  font-size: 12px;
  line-height: 16px;
  border-bottom: 1px solid #9aa0a8;
  background: #e8ebf0;
}
.stab::after {
  content: "";
  position: absolute;
  right: 5px;
  top: -1px;
  height: 20px;
  width: 0;
  border-right: 1px solid #9aa0a8;
  transform: skewX(-42deg);
}
.stab-on {
  background: #fff;
  color: #3a3f46;
  font-weight: bold;
  border-bottom: 1px solid #fff;
}
.stab-new {
  width: 40px;
  padding-left: 9px;
}
.h-split {
  width: 8px;
  height: 16px;
  flex: none;
  background: #e8eaee;
  border: 1px solid #9aa0a8;
  display: flex;
  align-items: center;
  justify-content: center;
}
.h-split i {
  width: 2px;
  height: 10px;
  background: #fff;
  border-left: 1px solid #777;
}
.h-split-right {
  margin-left: 6px;
}
.h-thumb {
  width: 229px;
  height: 16px;
  flex: none;
  margin-left: 6px;
  background: linear-gradient(#f3f5f8, #dde1e7);
  border: 1px solid #a6acb4;
  border-radius: 2px;
  display: flex;
  align-items: center;
  justify-content: center;
  gap: 1px;
}
.h-thumb i {
  width: 1px;
  height: 8px;
  background: #777d85;
}
.h-rest {
  width: 40px;
  flex: none;
}

/* Status bar */
.status-bar {
  height: 21px;
  flex: none;
  display: flex;
  align-items: center;
  background: linear-gradient(#e4e7eb, #c6cbd3 40%, #c9ced6);
  border-top: 1px solid #8f959d;
  color: #4a4f57;
  font-size: 12px;
}
.status-bar > * {
  flex: none;
}
.status-text {
  width: 47px;
  padding-left: 7px;
}
.st-sep {
  width: 1px;
  height: 20px;
  background: #9aa0a8;
}
.st-fill {
  width: 495px;
}
.view-btn {
  width: 18px;
  height: 19px;
  display: flex;
  align-items: center;
  justify-content: center;
}
.view-on {
  margin-left: 5px;
  background: linear-gradient(#fde7a0, #f9c94f);
  border: 1px solid #d9a440;
  border-radius: 2px;
}
.zoom-pct {
  margin-left: 10px;
  width: 36px;
  color: #5a3a48;
}
.zoom-btn {
  position: relative;
  width: 16px;
  height: 16px;
  border-radius: 50%;
  background: linear-gradient(#fbfcfd, #d7dbe1);
  border: 1px solid #8a9098;
}
.zh,
.zv {
  position: absolute;
  background: #4a4f57;
}
.zh {
  left: 3px;
  top: 6px;
  width: 8px;
  height: 2px;
}
.zv {
  left: 6px;
  top: 3px;
  width: 2px;
  height: 8px;
}
.zoom-track {
  position: relative;
  width: 100px;
  height: 2px;
  background: #9aa0a8;
}
.zoom-thumb {
  position: absolute;
  left: 46px;
  top: -7px;
  width: 9px;
  height: 14px;
  background: #eef0f3;
  border: 1px solid #7d838c;
  clip-path: polygon(0 0, 100% 0, 100% 65%, 50% 100%, 0 65%);
}
.grip {
  margin-left: 9px;
}
```
